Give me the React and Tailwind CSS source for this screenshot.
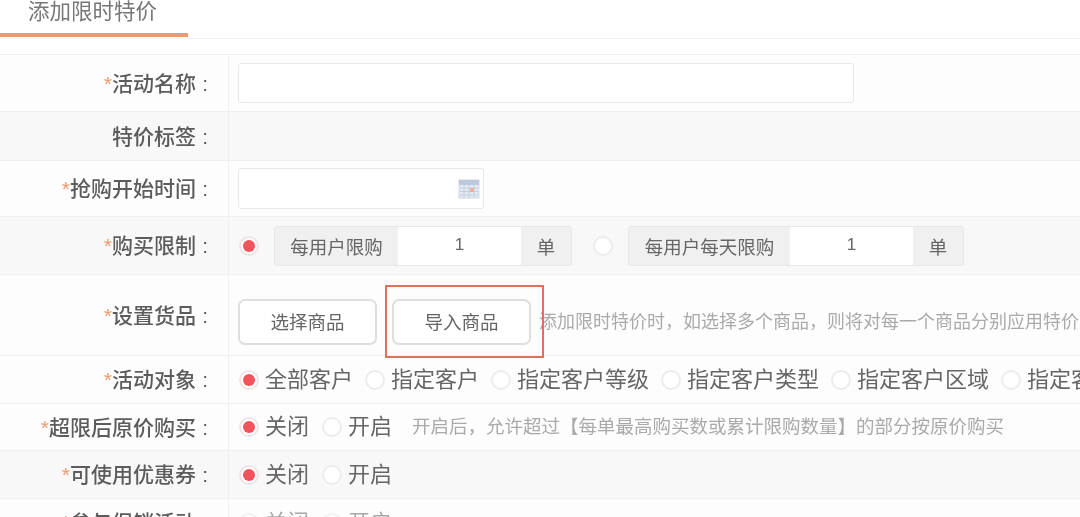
const FONT = "font-['Liberation_Sans','Noto_Sans_CJK_SC',sans-serif]";

function Radio({ checked, disabled }) {
  return (
    <span
      className={`flex h-[20px] w-[20px] shrink-0 items-center justify-center rounded-full border-2 bg-white ${
        checked ? "border-[#f1e4e4]" : "border-[#ececec]"
      } ${disabled ? "opacity-60" : ""}`}
    >
      {checked && <span className="h-[12px] w-[12px] rounded-full bg-[#f5535b]" />}
    </span>
  );
}

function Option({ label, checked, disabled, className = "" }) {
  return (
    <div className={`flex shrink-0 items-center gap-[6px] ${className}`}>
      <Radio checked={checked} disabled={disabled} />
      <span className={`text-[22px] leading-none ${disabled ? "text-[#aaa]" : "text-[#666]"}`}>{label}</span>
    </div>
  );
}

function Row({ label, required = true, gray, height, children, className = "" }) {
  return (
    <div className={`flex border-b border-[#f0f0f0] ${gray ? "bg-[#f8f8f8]" : "bg-[#fdfdfd]"} ${height}`}>
      <div className="flex w-[229px] shrink-0 items-center justify-end border-r border-[#f0f0f0] pr-[20px] text-[21px] font-medium leading-none text-[#5c5c5c]">
        {required && <span className="text-[#ee9a6f]">*</span>}
        {label}
        <span className="w-[12px] text-right">:</span>
      </div>
      <div className={`flex min-w-0 flex-1 items-center whitespace-nowrap pl-[9px] ${className}`}>{children}</div>
    </div>
  );
}

function LimitGroup({ label, addonWidth }) {
  return (
    <div className="flex h-[40px] shrink-0 overflow-hidden rounded-[3px] border border-[#e8e8e8] bg-[#f0f0f0] text-[18.5px] text-[#666]">
      <div className={`flex items-center justify-center pt-[4px] ${addonWidth}`}>{label}</div>
      <div className="flex w-[123px] items-center justify-center bg-white pb-[2px] text-[17px]">1</div>
      <div className="flex w-[50px] items-center justify-center pt-[4px]">单</div>
    </div>
  );
}

function CalendarIcon() {
  return (
    <svg width="22" height="20" viewBox="0 0 22 20" className="shrink-0 opacity-80">
      <rect x="1" y="1" width="20" height="18" fill="#dfe5f0" stroke="#c3cede" />
      <rect x="1" y="1" width="20" height="5" fill="#a9bcd5" />
      <path d="M2 9h18M2 12.500h18M2 16h18M6 6v13M11 6v13M16 6v13" stroke="#b5c2d7" strokeWidth="1" />
      <rect x="12" y="9" width="4" height="4" fill="#ef9a80" />
    </svg>
  );
}

export default function App() {
  return (
    <div className={`h-[517px] w-[1080px] overflow-hidden bg-white blur-[0.6px] ${FONT}`}>
      {/* Tab */}
      <div className="h-[39px] border-b border-[#f2f2f2]">
        <div className="h-[37px] w-[188px] border-b-[4px] border-[#ee9a6f] pl-[28px] pt-[2px] text-[21.5px] leading-[21px] text-[#777]">
          添加限时特价
        </div>
      </div>

      <div className="mt-[15px] border-t border-[#f0f0f0]">
        <Row label="活动名称" height="h-[57px]">
          <div className="h-[40px] w-[616px] rounded-[3px] border border-[#e8e8e8] bg-white" />
        </Row>
        <Row label="特价标签" required={false} gray height="h-[49px]" />
        <Row label="抢购开始时间" height="h-[56px]">
          <div className="flex h-[41px] w-[246px] items-center justify-end rounded-[3px] border border-[#e8e8e8] bg-white pr-[3px]">
            <CalendarIcon />
          </div>
        </Row>
        <Row label="购买限制" gray height="h-[58px]">
          <div className="ml-[1px]">
            <Radio checked />
          </div>
          <div className="ml-[15px]">
            <LimitGroup label="每用户限购" addonWidth="w-[123px]" />
          </div>
          <div className="ml-[21px]">
            <Radio />
          </div>
          <div className="ml-[15px]">
            <LimitGroup label="每用户每天限购" addonWidth="w-[161px]" />
          </div>
        </Row>
        <Row label="设置货品" height="h-[81px]" className="relative pt-[13px]">
          <button className="h-[46px] w-[139px] shrink-0 rounded-[7px] border-2 border-[#dedede] bg-white pt-[2px] text-[18.5px] text-[#666]">
            选择商品
          </button>
          <button className="ml-[15px] h-[46px] w-[139px] shrink-0 rounded-[7px] border-2 border-[#dedede] bg-white pt-[2px] text-[18.5px] text-[#666]">
            导入商品
          </button>
          <span className="ml-[8px] pt-[2px] text-[18px] text-[#aaa]">添加限时特价时，如选择多个商品，则将对每一个商品分别应用特价</span>
          <div className="absolute left-[156px] top-[10px] h-[73px] w-[159px] border-2 border-[#e0705c]" />
        </Row>
        <Row label="活动对象" height="h-[48px]" className="pl-[10px]">
          <Option label="全部客户" checked />
          <Option label="指定客户" className="ml-[12px]" />
          <Option label="指定客户等级" className="ml-[12px]" />
          <Option label="指定客户类型" className="ml-[12px]" />
          <Option label="指定客户区域" className="ml-[12px]" />
          <Option label="指定客户标签" className="ml-[12px]" />
        </Row>
        <Row label="超限后原价购买" height="h-[47px]" className="pl-[10px]">
          <Option label="关闭" checked />
          <Option label="开启" className="ml-[13px]" />
          <span className="ml-[20px] text-[18.5px] text-[#aaa]">开启后，允许超过【每单最高购买数或累计限购数量】的部分按原价购买</span>
        </Row>
        <Row label="可使用优惠券" gray height="h-[48px]" className="pl-[10px]">
          <Option label="关闭" checked />
          <Option label="开启" className="ml-[13px]" />
        </Row>
        <Row label="参与促销活动" height="h-[48px]" className="pl-[10px]">
          <Option label="关闭" disabled />
          <Option label="开启" disabled className="ml-[13px]" />
        </Row>
      </div>
    </div>
  );
}
